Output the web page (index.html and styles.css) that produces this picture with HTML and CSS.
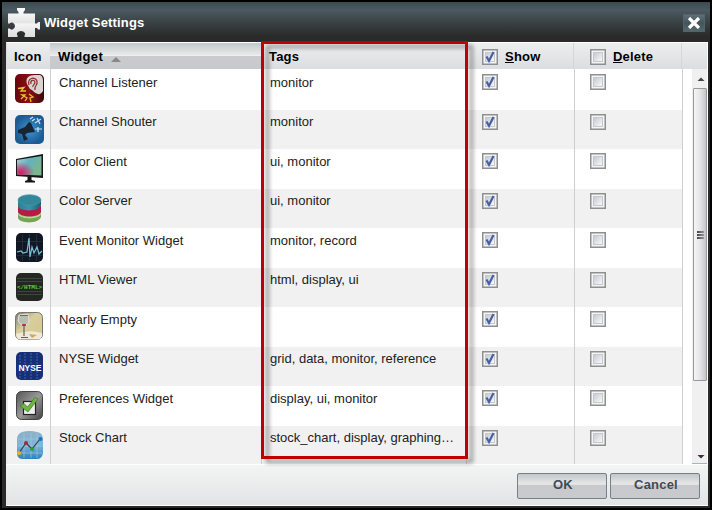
FILE: index.html
```html
<!DOCTYPE html>
<html lang="en">
<head>
<meta charset="utf-8">
<title>Widget Settings</title>
<link rel="stylesheet" href="styles.css">
</head>
<body>
<svg width="0" height="0" class="defs">
  <defs>
    <linearGradient id="gloss" x2="0" y2="1"><stop offset="0" stop-color="#fff"/><stop offset=".5" stop-color="#e4e4e4"/><stop offset=".55" stop-color="#f4f4f4"/><stop offset="1" stop-color="#ddd"/></linearGradient>
    <linearGradient id="screen" x2="1" y2=".5"><stop offset="0" stop-color="#b8cfd4"/><stop offset=".5" stop-color="#62b2bf"/><stop offset="1" stop-color="#7db58c"/></linearGradient>
    <radialGradient id="pink" cx=".15" cy=".85" r=".55"><stop offset="0" stop-color="#e01560"/><stop offset="1" stop-color="#e01560" stop-opacity="0"/></radialGradient>
    <linearGradient id="red"><stop offset="0" stop-color="#65070b"/><stop offset=".5" stop-color="#8a1015"/><stop offset="1" stop-color="#3d0709"/></linearGradient>
    <radialGradient id="blue"><stop offset="0" stop-color="#3e97d8"/><stop offset="1" stop-color="#1d5c93"/></radialGradient>
    <linearGradient id="steel" x2="1" y2="1"><stop offset="0" stop-color="#555"/><stop offset=".5" stop-color="#999"/><stop offset="1" stop-color="#444"/></linearGradient>
    <linearGradient id="sky" x2="0" y2="1"><stop offset="0" stop-color="#8fb0c4"/><stop offset=".5" stop-color="#7db5da"/><stop offset="1" stop-color="#2e83bd"/></linearGradient>
    <linearGradient id="wine" x2="1" y2="1"><stop offset="0" stop-color="#777772"/><stop offset=".4" stop-color="#d8cf9e"/><stop offset="1" stop-color="#d6c68a"/></linearGradient>
    <linearGradient id="box" x2="1" y2="1"><stop offset="0" stop-color="#c3c7d0"/><stop offset="1" stop-color="#fbfbfb"/></linearGradient>
    <linearGradient id="teal"><stop offset="0" stop-color="#2a7f92"/><stop offset=".5" stop-color="#3c93a8"/><stop offset="1" stop-color="#1b6073"/></linearGradient>
    <symbol id="unchecked" viewBox="0 0 16 16"><rect x=".75" y=".75" width="14.500" height="14.500" fill="#f4f4f4" stroke="#8e8f8f" stroke-width="1.500"/><rect x="3.500" y="3.500" width="9" height="9" fill="url(#box)" stroke="#c5c8cc"/></symbol>
    <symbol id="checked" viewBox="0 0 16 16"><use href="#unchecked"/><path d="M4.500 7.500 L7 12 L11.500 3" fill="none" stroke="#4660a5" stroke-width="2.200"/></symbol>
  </defs>
</svg>
<div class="dialog">
  <header class="titlebar">
    <svg class="puzzle" width="32" height="29" viewBox="0 0 32 29"><path fill="url(#gloss)" d="M0 5.500H10.500V4L9 2V0H17V2L15.500 4V5.500H27V15.500H29L30 14H32V21.500H30L29 20H27V29H16.500V27.500Q17.500 26 17 25Q15.500 23 13 23Q10.500 23 9 25Q8.500 26 9.500 27.500V29H0V20.500H1.500Q3 22 4.500 21.500Q7 20.500 7 18Q7 15.500 4.500 14.500Q3 14 1.500 15.500H0Z"/></svg>
    <h1>Widget Settings</h1>
    <button class="close" aria-label="Close"><svg width="14" height="12" viewBox="0 0 14 12"><path d="M2 1L12 11M12 1L2 11" stroke="#fff" stroke-width="3.200"/></svg></button>
  </header>
  <div class="head">
    <div class="h-icon">Icon</div>
    <div class="h-widget">Widget<i class="sort"></i></div>
    <div class="h-tags">Tags</div>
    <div class="h-check"><svg width="16" height="16"><use href="#checked"/></svg><span><u>S</u>how</span></div>
    <div class="h-check"><svg width="16" height="16"><use href="#unchecked"/></svg><span><u>D</u>elete</span></div>
    <div class="h-rest"></div>
  </div>
  <main class="body">
    <div class="rows">
      <div class="row first"><div class="icon"><svg width="29" height="29" viewBox="0 0 29 29"><rect width="29" height="29" rx="5" fill="url(#red)"/><path d="M12 10C10 4 14 1 20 1H25Q28 2 28 7V17Q26 21 23 20C19 19 18 16 15 15Z" fill="#d9d3d1"/><path d="M14 11C12 4 20 2 22 7C23 12 19 11 20 16M16 10C15 6 19 5 20 8C20 11 17 11 18 13" fill="none" stroke="#8d2a2e" stroke-width="1.200"/><path d="M3 14.500L9 13.500L6 17L11 17M6 25L10 21L7 21L12 24L10 27M14 20L18 23L15 24L16 28" fill="none" stroke="#e5c22b" stroke-width="1.300"/></svg></div><div class="name">Channel Listener</div><div class="tags">monitor</div><div class="check"><svg width="16" height="16"><use href="#checked"/></svg></div><div class="check"><svg width="16" height="16"><use href="#unchecked"/></svg></div></div>
      <div class="row"><div class="icon"><svg width="29" height="29" viewBox="0 0 29 29"><rect width="29" height="29" rx="5" fill="url(#blue)"/><path d="M3 15L10 12L14 7L16 8L20 17L12 18L10 20L13 24L9 26L7 19L3 18Z" fill="#182532"/><path d="M15 4L18 2M17 6L20 4M20 8L26 4M22 3L25 9M20 14H27M23 12V17" stroke="#cbe3f2" stroke-width="1.200"/></svg></div><div class="name">Channel Shouter</div><div class="tags">monitor</div><div class="check"><svg width="16" height="16"><use href="#checked"/></svg></div><div class="check"><svg width="16" height="16"><use href="#unchecked"/></svg></div></div>
      <div class="row"><div class="icon"><svg width="29" height="29" viewBox="0 0 29 29"><path d="M1 5L28 0V24L1 22Z" fill="#171717"/><path d="M2 6L26.500 2V21.500L2 20.500Z" fill="url(#screen)"/><path d="M2 6L26.500 2V21.500L2 20.500Z" fill="url(#pink)"/><path d="M12.500 23H16.500V26L20 27V28.500H10V27L12.500 26Z" fill="#151515"/></svg></div><div class="name">Color Client</div><div class="tags">ui, monitor</div><div class="check"><svg width="16" height="16"><use href="#checked"/></svg></div><div class="check"><svg width="16" height="16"><use href="#unchecked"/></svg></div></div>
      <div class="row"><div class="icon"><svg width="29" height="29" viewBox="0 0 29 29"><path d="M3 17V24C5 30 24 30 26 23V17Z" fill="#75a454"/><ellipse cx="14.500" cy="19.500" rx="11.500" ry="5" fill="#b6d694"/><path d="M3 12V18C5 24 24 24 26 18V12Z" fill="#b51b45"/><path d="M3 6V12C4 18 25 18 26 11V6Z" fill="url(#teal)"/><ellipse cx="14.500" cy="6" rx="11.500" ry="5.300" fill="#32879b" stroke="#4b95a6" stroke-width=".7"/></svg></div><div class="name">Color Server</div><div class="tags">ui, monitor</div><div class="check"><svg width="16" height="16"><use href="#checked"/></svg></div><div class="check"><svg width="16" height="16"><use href="#unchecked"/></svg></div></div>
      <div class="row"><div class="icon"><svg width="29" height="29" viewBox="0 0 29 29"><rect x="1" width="27" height="29" rx="5" fill="#111824"/><path d="M7.500 1V28M14.500 1V28M21.500 1V28M2 8.500H27M2 22.500H27" stroke="#222c3c"/><path d="M2 19L6 18L8 20L12 19L14 5L15 24L17 14L19 20L22 14L24 21L27 18" fill="none" stroke="#74c3d3" stroke-width="1.200"/></svg></div><div class="name">Event Monitor Widget</div><div class="tags">monitor, record</div><div class="check"><svg width="16" height="16"><use href="#checked"/></svg></div><div class="check"><svg width="16" height="16"><use href="#unchecked"/></svg></div></div>
      <div class="row"><div class="icon"><svg width="29" height="29" viewBox="0 0 29 29"><rect x="1" width="27" height="28" rx="5" fill="#232623"/><path d="M2 5.500H27M2 8.500H27M2 18.500H27M2 21.500H27" stroke="#3e443e"/><text x="14.500" y="15.500" text-anchor="middle" class="code">&lt;/HTML&gt;</text></svg></div><div class="name">HTML Viewer</div><div class="tags">html, display, ui</div><div class="check"><svg width="16" height="16"><use href="#checked"/></svg></div><div class="check"><svg width="16" height="16"><use href="#unchecked"/></svg></div></div>
      <div class="row"><div class="icon"><svg width="29" height="29" viewBox="0 0 29 29"><rect x=".5" y=".5" width="27" height="27" rx="5" fill="url(#wine)" stroke="#77776f"/><path d="M1 22Q14 17 27 21V24Q26 27.500 23 27.500H5Q1 27 1 22Z" fill="#eee9dc"/><path d="M4 3L3 9Q5 13 9 13Q14 13 14 8L13 2Z" fill="#bdbbb1" stroke="#e2e2da"/><path d="M5 3.500H13" stroke="#a34e60"/><path d="M9 12V24M6 25.500H13" stroke="#61625e" stroke-width="1.200"/><path d="M7 13H11" stroke="#b01637" stroke-width="1.500"/><path d="M14 22L22 23L17 26Z" fill="#d7a94b"/></svg></div><div class="name">Nearly Empty</div><div class="tags"></div><div class="check"><svg width="16" height="16"><use href="#checked"/></svg></div><div class="check"><svg width="16" height="16"><use href="#unchecked"/></svg></div></div>
      <div class="row"><div class="icon"><svg width="29" height="29" viewBox="0 0 29 29"><rect x="1" width="27" height="28" rx="5" fill="#162f77"/><path d="M5 3V26M10 1V27M16 1V28M22 1V28" stroke="#3a66a6" stroke-dasharray="2 1"/><text x="3.500" y="18.500" class="nyse" textLength="23" lengthAdjust="spacingAndGlyphs">NYSE</text></svg></div><div class="name">NYSE Widget</div><div class="tags">grid, data, monitor, reference</div><div class="check"><svg width="16" height="16"><use href="#checked"/></svg></div><div class="check"><svg width="16" height="16"><use href="#unchecked"/></svg></div></div>
      <div class="row"><div class="icon"><svg width="29" height="29" viewBox="0 0 29 29"><rect x="1.500" y=".5" width="26" height="28" rx="5" fill="url(#steel)" stroke="#424444"/><rect x="8.500" y="10.500" width="12" height="13" fill="#eee" stroke="#222" stroke-width="1.200"/><path d="M5 15L9 12.500L12.500 16L20 6.500L23 8L13 21Z" fill="#6cb83d" stroke="#39781e" stroke-width=".7"/></svg></div><div class="name">Preferences Widget</div><div class="tags">display, ui, monitor</div><div class="check"><svg width="16" height="16"><use href="#checked"/></svg></div><div class="check"><svg width="16" height="16"><use href="#unchecked"/></svg></div></div>
      <div class="row last"><div class="icon"><svg width="29" height="29" viewBox="0 0 29 29"><path d="M7 1Q15 -1 22 1Q28 2 28 8V22Q27 28 22 28H8Q2 28 2 22V8Q2 3 7 1Z" fill="url(#sky)"/><path d="M9 2V27M16 2V27M22 2V27M3 8H27M3 15H27M3 22H27" stroke="#a9cadd" stroke-width=".6"/><path d="M4 22L11 12L17 18L25 8" fill="none" stroke="#33434c" stroke-width="1.200"/><circle cx="4" cy="22" r="2" fill="#f2ae20"/><circle cx="11" cy="12" r="2" fill="#ad2732"/><circle cx="17" cy="18" r="2" fill="#319b31"/><circle cx="25.500" cy="8" r="2" fill="#1975c7"/></svg></div><div class="name">Stock Chart</div><div class="tags">stock_chart, display, graphing…</div><div class="check"><svg width="16" height="16"><use href="#checked"/></svg></div><div class="check"><svg width="16" height="16"><use href="#unchecked"/></svg></div></div>
    </div>
    <div class="scrollbar">
      <svg class="arrow" width="14" height="19" viewBox="0 0 14 19"><path d="M4.500 12L8 8.500L11.500 12Z" fill="#444"/></svg>
      <div class="thumb"><i></i><i></i><i></i></div>
      <svg class="arrow down" width="14" height="13" viewBox="0 0 14 13"><path d="M4.500 5H11.500L8 8.500Z" fill="#333"/></svg>
    </div>
  </main>
  <footer class="footer"><button class="btn">OK</button><button class="btn">Cancel</button></footer>
</div>
<div class="highlight"></div>
</body>
</html>
```
FILE: styles.css
```css
* { box-sizing: border-box; }
body { margin: 0; width: 712px; height: 510px; padding: 2px; overflow: hidden; background: #000; font: 13px "Liberation Sans", Arial, sans-serif; color: #222; }
svg { display: block; flex: none; }
.defs { position: absolute; }
button { padding: 0; font: inherit; }
.dialog { height: 506px; width: 708px; padding: 0 2px 2px 4px; background: #2a2a2a; display: flex; flex-direction: column; }
.titlebar { height: 40px; flex: none; margin: 0 -2px 0 -4px; padding: 6px 5px 0 6px; display: flex; background: linear-gradient(#3c4a50 0, #4b5a61 20%, #3c4447 48%, #2a2a2a 85%); color: #fff; }
.puzzle { margin-right: 4px; }
h1 { margin: 0; padding-top: 7px; font-size: 13px; line-height: 15px; letter-spacing: .15px; flex: 1; }
.close { width: 22px; height: 18px; margin-top: 6px; border: 1px solid #52636b; background: linear-gradient(#606f76, #43545c 50%, #54666e); display: flex; align-items: center; justify-content: center; }
.head { height: 27px; flex: none; display: flex; border-top: 1px solid #fff; border-left: 1px solid #ddd; border-right: 1px solid #fff; background: linear-gradient(#eceeee, #dcdde0); font-weight: bold; color: #000; line-height: 15px; letter-spacing: .2px; }
.head > div { padding-top: 6px; }
.h-icon { width: 43px; padding-left: 7px; }
.h-widget { width: 212px; padding-left: 8px; display: flex; letter-spacing: .3px; background: linear-gradient(#c3c9cb 0, #e8eaea 46%, #f0f1f1 49%, #cacbcf 50%, #c8c9cd); }
.sort { width: 10px; height: 6px; margin: 7px 0 0 8px; border: solid transparent; border-width: 0 5px 5px; border-bottom-color: #888; }
.h-tags { width: 204px; padding-left: 7px; }
.head > .h-check { width: 108px; padding-left: 16px; display: flex; border-right: 1px solid #d4d6d8; }
.h-check span { margin-left: 7px; }
.body { flex: none; height: 395px; display: flex; background: #fff; }
.rows { width: 677px; border-left: 2px solid #ececec; }
.row { height: 40px; display: grid; grid-template-columns: 43px 211px 205px 108px 108px; background: #fff; }
.row:nth-child(even) { height: 39px; background: #f1f1f1; }
.row.first { height: 41px; }
.row.last { height: 38px; }
.row > div { border-right: 1px solid #cfcfcf; line-height: 15px; }
.icon { padding: 5px 0 0 7px; }
.name { padding: 5px 0 0 8px; }
.tags { padding: 5px 0 0 8px; }
.check { padding: 4px 0 0 15px; }
.row.first .name, .row.first .tags { padding-top: 6px; }
.row.first .check { padding-top: 5px; }
.row:nth-child(even) .name, .row:nth-child(even) .tags { padding-top: 4px; }
.row:nth-child(even) .check { padding-top: 3.5px; }
.code { font: bold 6px "Liberation Mono", monospace; fill: #54d52c; }
.nyse { font: bold 9px "Liberation Sans", sans-serif; fill: #fff; }
.scrollbar { width: 15px; margin-left: 9px; padding-left: 1px; display: flex; flex-direction: column; background: #f0f0f0; border-bottom: 1px solid #8fb8e6; }
.thumb { height: 293px; flex: none; border: 1px solid #999; border-radius: 1px; background: linear-gradient(90deg, #f5f5f5, #e5e5e7 50%, #c4c5c9); display: flex; flex-direction: column; align-items: center; justify-content: center; gap: 1px; }
.thumb i { width: 7px; height: 2px; background: linear-gradient(90deg, #444, #999); }
.down { margin-top: auto; }
.footer { flex: 1; display: flex; justify-content: flex-end; gap: 3px; padding: 8px 8px 0 0; background: linear-gradient(#f3f5f4, #e2e3e5); border-bottom: 1px solid #fff; border-top: 1px solid #fff; }
.btn { width: 90px; height: 26px; padding: 0 0 3px 2px; border: 1px solid #758088; border-radius: 2px; background: linear-gradient(#c2c7ca, #e7e8e8 43%, #c8c9cc 47%, #c9cacd); font-weight: bold; color: #434b54; letter-spacing: .2px; }
.highlight { position: absolute; left: 261px; top: 41px; width: 207px; height: 418px; border: 3px solid #c00000; filter: drop-shadow(5px 4px 2px rgba(0,0,0,.4)); }
```
